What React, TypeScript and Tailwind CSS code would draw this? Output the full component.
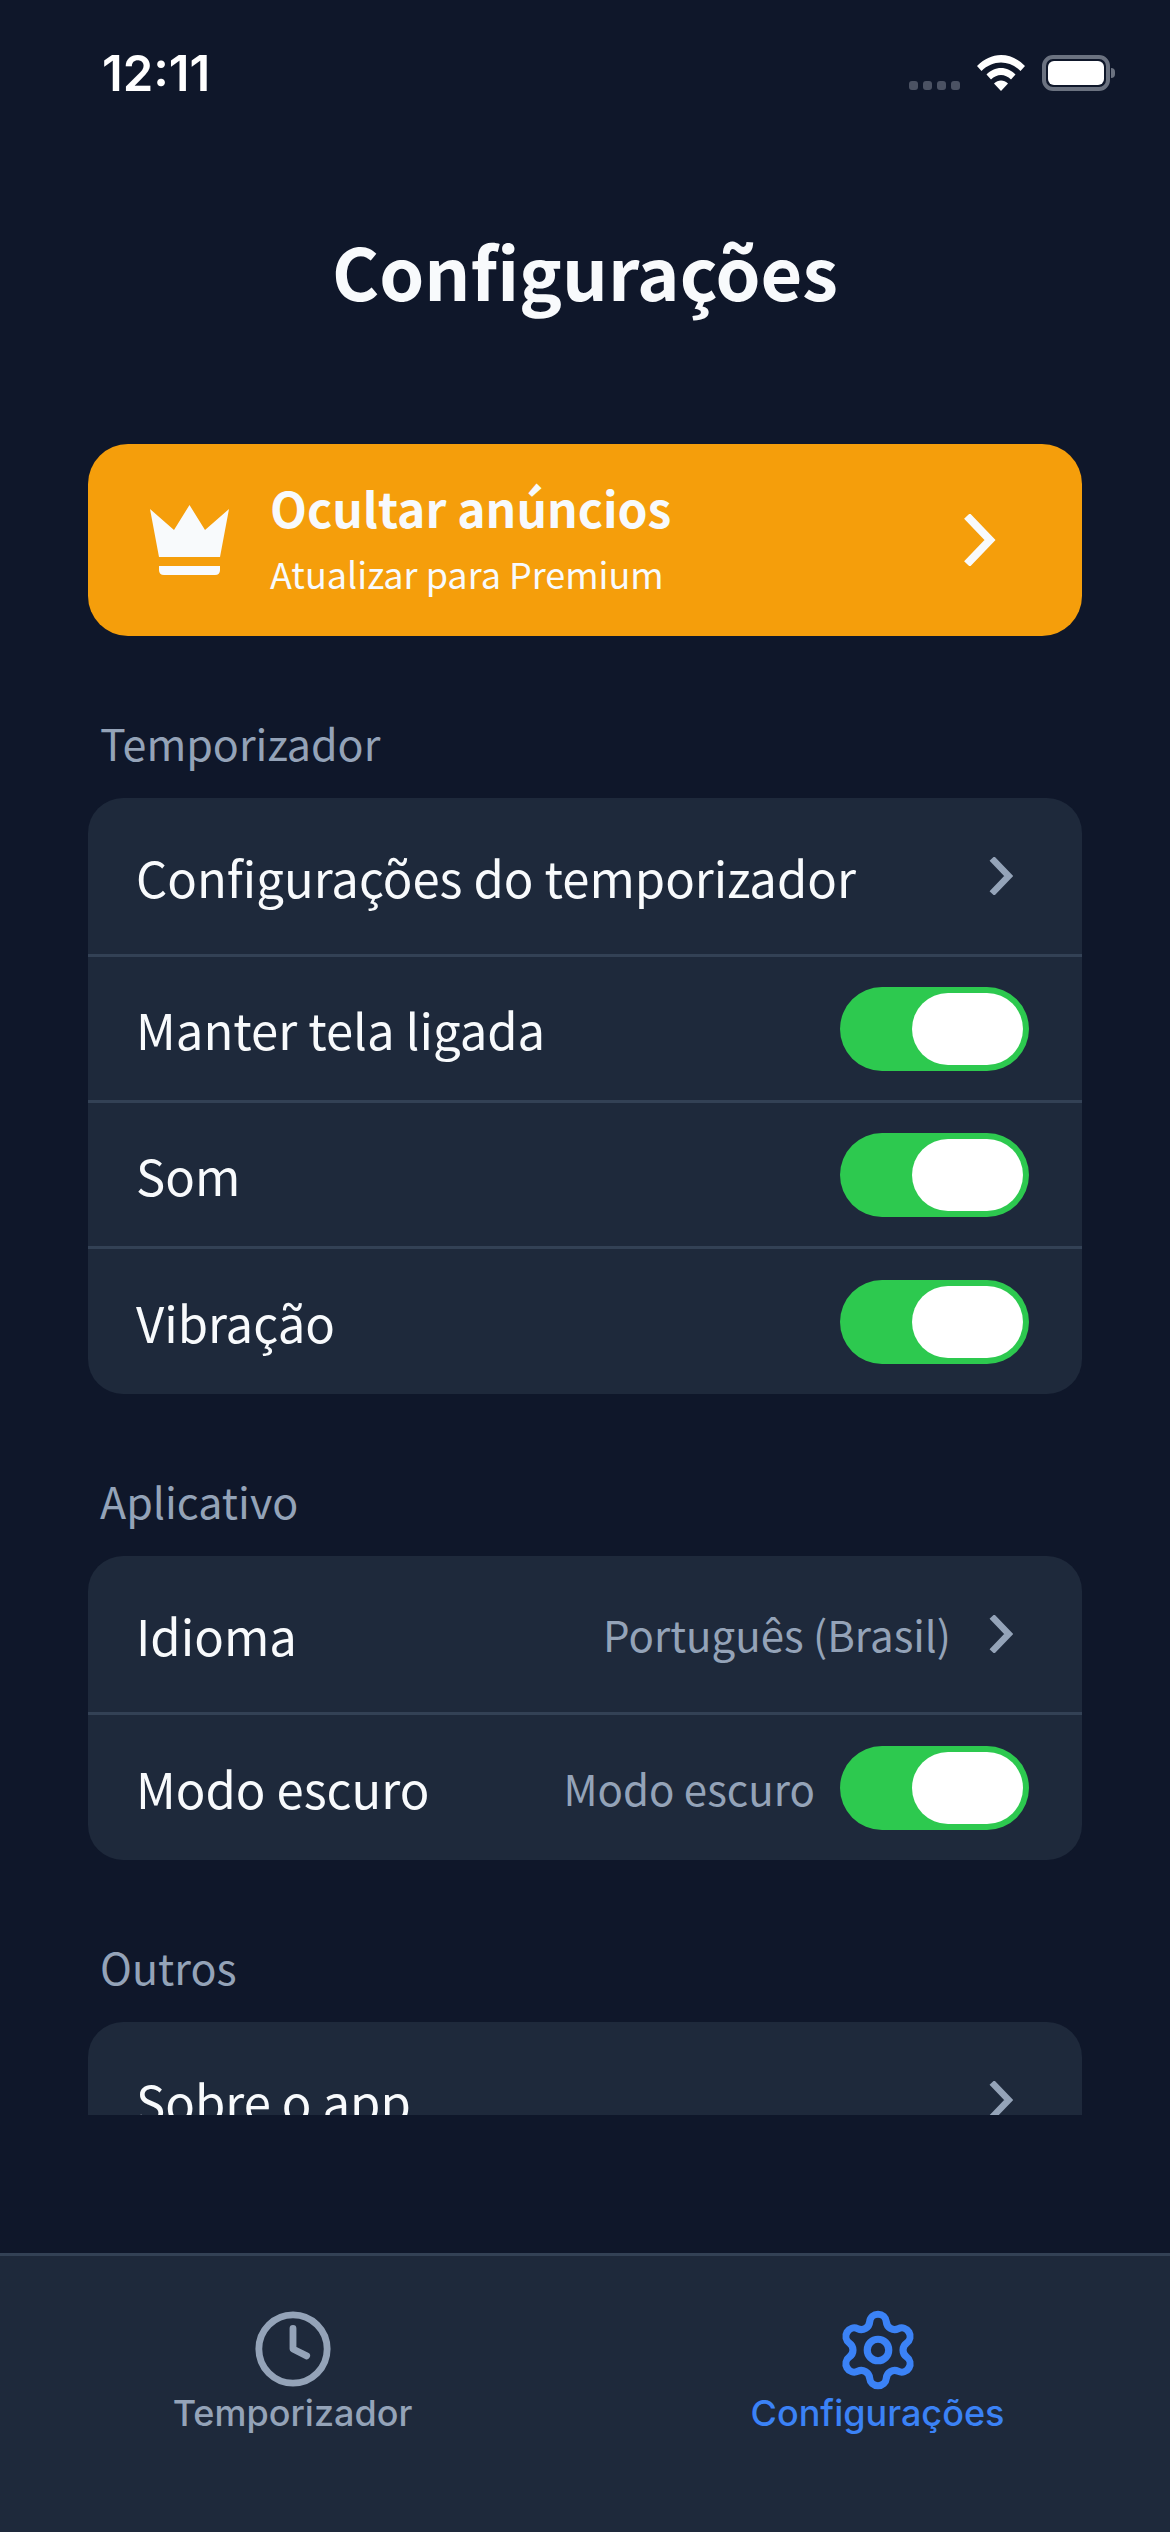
import { Clock, Settings } from 'lucide-react';

const font = "font-['Noto_Sans_CJK_JP','Noto_Sans',sans-serif]";

function Chevron({ big }: { big?: boolean }) {
  return (
    <svg
      className={big ? 'w-[33px] h-[52px]' : 'w-[24px] h-[38px] mr-[16px]'}
      viewBox="0 0 33 52"
      fill="none"
      stroke="currentColor"
      strokeWidth={big ? 8 : 9}
    >
      <path d="M4 2 L27 26 L4 50" />
    </svg>
  );
}

function Toggle() {
  return (
    <div className="w-[189px] h-[84px] rounded-full bg-[#2dc94f] flex items-center justify-end pr-[6px]">
      <div className="w-[111px] h-[72px] rounded-full bg-white" />
    </div>
  );
}

function Row({ label, h, border = true, children }: { label: string; h: string; border?: boolean; children?: React.ReactNode }) {
  return (
    <div className={`${h} flex items-center justify-between pl-[48px] pr-[53px] ${border ? 'border-b-[3px] border-[#334155]' : ''}`}>
      <span className="text-[49px] leading-none font-normal text-[#f8fafc]">{label}</span>
      {children}
    </div>
  );
}

function SectionLabel({ children, className }: { children: string; className: string }) {
  return <p className={`text-[43px] leading-none text-[#94a3b8] ml-[12px] ${className}`}>{children}</p>;
}

export default function App() {
  return (
    <div className={`w-[1170px] h-[2532px] bg-[#0f172a] flex flex-col overflow-hidden ${font}`}>
      {/* status bar */}
      <div className="h-[150px] shrink-0 flex justify-between items-start pt-[50px] pl-[102px] pr-[55px]">
        <span className="font-['Inter',sans-serif] text-[49px] leading-[48px] font-semibold text-white">12:11</span>
        <div className="flex items-end gap-[17px] mt-[5px]">
          <div className="flex gap-[5px] mb-[1px]">
            <div className="w-[9px] h-[9px] rounded-[3px] bg-[#4b5263]" />
            <div className="w-[9px] h-[9px] rounded-[3px] bg-[#4b5263]" />
            <div className="w-[9px] h-[9px] rounded-[3px] bg-[#4b5263]" />
            <div className="w-[9px] h-[9px] rounded-[3px] bg-[#4b5263]" />
          </div>
          <svg className="w-[48px] h-[36px]" viewBox="0 0 48 36" fill="white">
            <path d="M24 0 C33 0 41 4 48 11 L43.500 16 C38 10.500 31 7.500 24 7.500 C17 7.500 10 10.500 4.500 16 L0 11 C7 4 15 0 24 0 Z" />
            <path d="M24 13 C29.500 13 34.500 15.500 38.500 19.500 L34 24.500 C31 21.500 27.500 20 24 20 C20.500 20 17 21.500 14 24.500 L9.500 19.500 C13.500 15.500 18.500 13 24 13 Z" />
            <path d="M24 25.500 C26.500 25.500 29 26.500 31 28.500 L24 36 L17 28.500 C19 26.500 21.500 25.500 24 25.500 Z" />
          </svg>
          <div className="flex items-center gap-[1px]">
            <div className="w-[68px] h-[36px] rounded-[11px] border-[4px] border-[#6b7280] p-[2px]">
              <div className="w-full h-full rounded-[6px] bg-white" />
            </div>
            <div className="w-[4px] h-[10px] rounded-r-full bg-[#6b7280]" />
          </div>
        </div>
      </div>

      <h1 className="text-[72px] leading-[100px] font-semibold text-[#f8fafc] text-center mt-[70px]">Configurações</h1>

      {/* scroll area, cut off above the tab bar */}
      <div className="h-[1671px] shrink-0 overflow-hidden mt-[124px] px-[88px]">
        <div className="h-[192px] rounded-[40px] bg-[#f59e0b] flex items-center pl-[62px] pr-[86px]">
          <svg className="w-[79px] h-[70px] shrink-0" viewBox="0 0 79 70" fill="#f8fafc">
            <path d="M0 4 L24 25 L39.500 0 L55 25 L79 4 L70 52 L9 52 Z" />
            <path d="M9 61 H70 V65 Q70 70 65 70 H14 Q9 70 9 65 Z" />
          </svg>
          <div className="ml-[41px] flex-1 text-[#f8fafc] -mt-[8px]">
            <p className="text-[48px] leading-[60px] font-bold">Ocultar anúncios</p>
            <p className="text-[36px] leading-[44px] mt-[14px]">Atualizar para Premium</p>
          </div>
          <span className="text-[#f8fafc]"><Chevron big /></span>
        </div>

        <SectionLabel className="mt-[85px]">Temporizador</SectionLabel>
        <div className="mt-[34px] rounded-[35px] bg-[#1e293b] overflow-hidden">
          <Row label="Configurações do temporizador" h="h-[159px]">
            <span className="text-[#94a3b8]"><Chevron /></span>
          </Row>
          <Row label="Manter tela ligada" h="h-[146px]">
            <Toggle />
          </Row>
          <Row label="Som" h="h-[146px]">
            <Toggle />
          </Row>
          <Row label="Vibração" h="h-[145px]" border={false}>
            <Toggle />
          </Row>
        </div>

        <SectionLabel className="mt-[85px]">Aplicativo</SectionLabel>
        <div className="mt-[34px] rounded-[35px] bg-[#1e293b] overflow-hidden">
          <Row label="Idioma" h="h-[159px]">
            <div className="flex items-center gap-[38px]">
              <span className="text-[42px] leading-none text-[#94a3b8]">Português (Brasil)</span>
              <span className="text-[#94a3b8]"><Chevron /></span>
            </div>
          </Row>
          <Row label="Modo escuro" h="h-[145px]" border={false}>
            <div className="flex items-center gap-[25px]">
              <span className="text-[42px] leading-none text-[#94a3b8]">Modo escuro</span>
              <Toggle />
            </div>
          </Row>
        </div>

        <SectionLabel className="mt-[85px]">Outros</SectionLabel>
        <div className="mt-[34px] rounded-[35px] bg-[#1e293b] overflow-hidden">
          <Row label="Sobre o app" h="h-[159px]">
            <span className="text-[#94a3b8]"><Chevron /></span>
          </Row>
        </div>
      </div>

      {/* tab bar */}
      <div className="mt-auto h-[279px] shrink-0 bg-[#1e293b] border-t-[3px] border-[#334155] grid grid-cols-2 font-['Inter',sans-serif]">
        <div className="flex flex-col items-center pt-[52px] text-[#94a3b8]">
          <Clock size={82} strokeWidth={2} />
          <span className="text-[36px] leading-[44px] mt-[1px] font-medium">Temporizador</span>
        </div>
        <div className="flex flex-col items-center pt-[51px] text-[#3b82f6]">
          <Settings size={86} strokeWidth={2} />
          <span className="text-[36px] leading-[44px] -mt-[2px] font-medium">Configurações</span>
        </div>
      </div>
    </div>
  );
}
